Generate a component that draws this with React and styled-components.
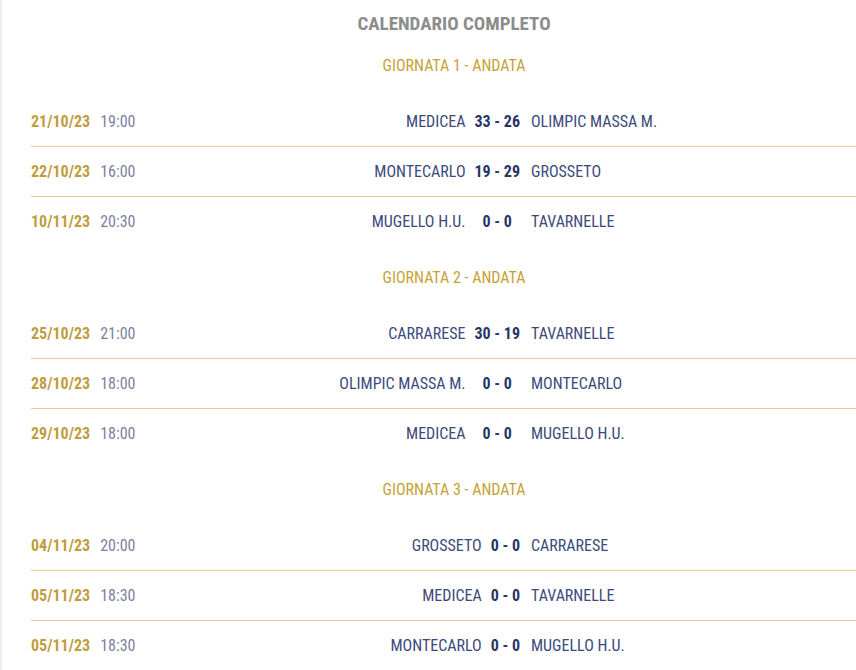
import React from "react";
import styled, { createGlobalStyle } from "styled-components";

const GlobalStyle = createGlobalStyle`
  html, body {
    margin: 0;
    padding: 0;
    background: #fff;
    overflow: hidden;
  }
  body {
    font-family: "Roboto Condensed", Roboto, "Liberation Sans", sans-serif;
  }
`;

const giornate = [
  {
    title: "GIORNATA 1 - ANDATA",
    matches: [
      { date: "21/10/23", time: "19:00", home: "MEDICEA", score: "33 - 26", away: "OLIMPIC MASSA M." },
      { date: "22/10/23", time: "16:00", home: "MONTECARLO", score: "19 - 29", away: "GROSSETO" },
      { date: "10/11/23", time: "20:30", home: "MUGELLO H.U.", score: "0 - 0", away: "TAVARNELLE" },
    ],
  },
  {
    title: "GIORNATA 2 - ANDATA",
    matches: [
      { date: "25/10/23", time: "21:00", home: "CARRARESE", score: "30 - 19", away: "TAVARNELLE" },
      { date: "28/10/23", time: "18:00", home: "OLIMPIC MASSA M.", score: "0 - 0", away: "MONTECARLO" },
      { date: "29/10/23", time: "18:00", home: "MEDICEA", score: "0 - 0", away: "MUGELLO H.U." },
    ],
  },
  {
    title: "GIORNATA 3 - ANDATA",
    matches: [
      { date: "04/11/23", time: "20:00", home: "GROSSETO", score: "0 - 0", away: "CARRARESE" },
      { date: "05/11/23", time: "18:30", home: "MEDICEA", score: "0 - 0", away: "TAVARNELLE" },
      { date: "05/11/23", time: "18:30", home: "MONTECARLO", score: "0 - 0", away: "MUGELLO H.U." },
    ],
  },
];

function App() {
  return (
    <Page>
      <GlobalStyle />
      <Calendar>
        <Title>CALENDARIO COMPLETO</Title>
        {giornate.map((g) => (
          <Giornata key={g.title}>
            <GiornataTitle>{g.title}</GiornataTitle>
            {g.matches.map((m, i) => (
              <Match key={i} $last={i === g.matches.length - 1}>
                <When>
                  <DateText>{m.date}</DateText>
                  <Time>{m.time}</Time>
                </When>
                <Team $home>{m.home}</Team>
                <Score>{m.score}</Score>
                <Team>{m.away}</Team>
              </Match>
            ))}
          </Giornata>
        ))}
      </Calendar>
    </Page>
  );
}

export default App;

const Page = styled.div`
  border-left: 2px solid #eeeeee;
  height: 670px;
  overflow: hidden;
`;
const Calendar = styled.section`
  margin-left: 29px;
  width: 846px;
`;
const Title = styled.h2`
  margin: 0;
  padding-top: 13px;
  height: 22px;
  line-height: 22px;
  text-align: center;
  font-size: 19px;
  font-weight: 700;
  color: #8c8c8c;
`;
const Giornata = styled.div`
  display: grid;
  grid-template-columns: 140px 1fr auto 349px;
`;
const GiornataTitle = styled.div`
  grid-column: 1 / -1;
  height: 62px;
  line-height: 62px;
  text-align: center;
  font-size: 16px;
  color: #c6a236;
`;
const Match = styled.div`
  grid-column: 1 / -1;
  display: grid;
  grid-template-columns: subgrid;
  align-items: center;
  height: 50px;
  box-sizing: border-box;
  border-bottom: 1px solid ${(p) => (p.$last ? "transparent" : "#e6cb8e")};
  font-size: 16px;
`;
const When = styled.div`
  display: flex;
  align-items: baseline;
  gap: 10px;
`;
const DateText = styled.span`
  font-weight: 700;
  color: #bf9d3e;
`;
const Time = styled.span`
  color: #7d819e;
`;
const Team = styled.span`
  text-align: ${(p) => (p.$home ? "right" : "left")};
  padding-left: ${(p) => (p.$home ? "0" : "3px")};
  padding-right: ${(p) => (p.$home ? "1px" : "0")};
  color: #3a4a7c;
  white-space: nowrap;
`;
const Score = styled.span`
  padding: 0 8px;
  text-align: center;
  font-weight: 700;
  color: #263566;
  white-space: nowrap;
`;
